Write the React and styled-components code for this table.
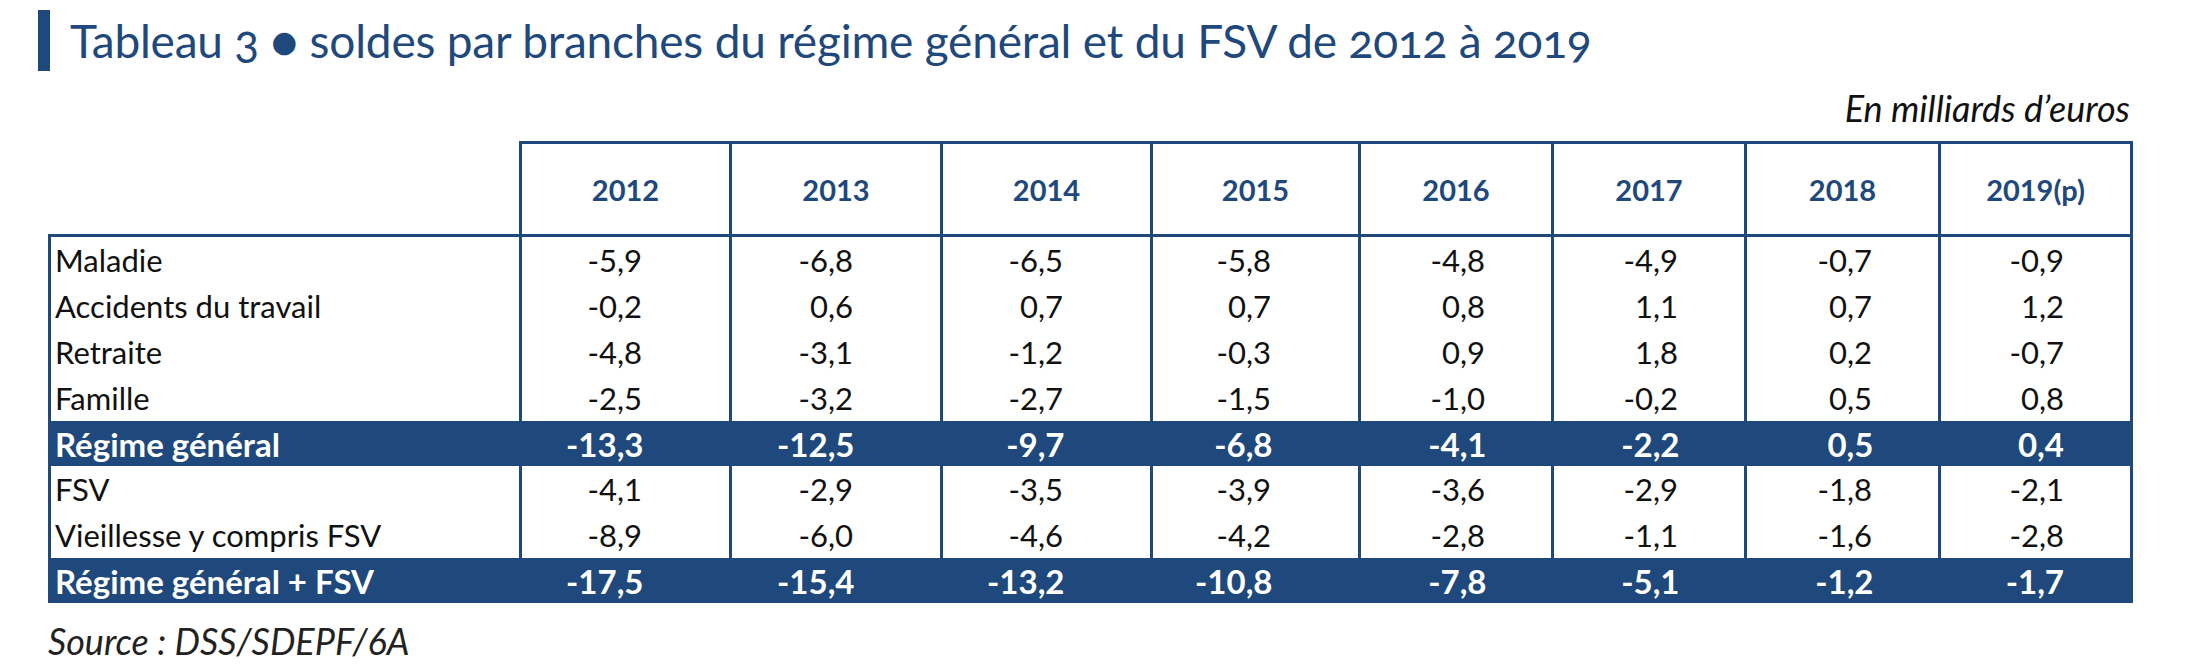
import React from "react";
import styled, { createGlobalStyle } from "styled-components";

const GlobalStyle = createGlobalStyle`
  html, body {
    margin: 0;
    padding: 0;
    background: #ffffff;
  }
  body {
    font-family: Lato, "Open Sans", "Liberation Sans", sans-serif;
    color: #111111;
  }
`;

const navy = "#1f487c";

const Page = styled.div`
  width: 2200px;
  height: 670px;
  box-sizing: border-box;
  padding: 10px 70px 0 48px;
`;

const TitleRow = styled.div`
  display: flex;
  align-items: center;
  gap: 20px;
  margin-left: -10px;
  height: 61px;
`;

const AccentBar = styled.div`
  width: 12px;
  height: 61px;
  background: ${navy};
`;

const Title = styled.h1`
  margin: 0;
  font-family: Lato, "Open Sans", sans-serif;
  font-weight: 400;
  font-size: 46px;
  line-height: 61px;
  color: ${navy};
  font-variant-numeric: oldstyle-nums;
  letter-spacing: -0.2px;
`;

const Unit = styled.div`
  margin-top: 18px;
  text-align: right;
  font-style: italic;
  font-size: 36px;
  line-height: 38px;
  color: #111111;
`;

const Table = styled.table`
  margin-top: 14px;
  width: 2082px;
  table-layout: fixed;
  border-collapse: collapse;
  font-size: 31px;
`;

const HeadCell = styled.th`
  height: 90px;
  padding: 0;
  border: 3px solid ${navy};
  color: ${navy};
  font-weight: 700;
  font-size: 29px;
  text-align: center;
  vertical-align: middle;
`;

const BlankCell = styled.th`
  border: none;
  padding: 0;
`;

const Row = styled.tr`
  background: ${({ $total }) => ($total ? navy : "#ffffff")};
  color: ${({ $total }) => ($total ? "#ffffff" : "#111111")};
  font-weight: ${({ $total }) => ($total ? 700 : 400)};
  font-size: ${({ $total }) => ($total ? "33px" : "31px")};
`;

const LabelCell = styled.td`
  height: ${({ $total }) => ($total ? "45px" : "46px")};
  padding: 0 0 0 4px;
  border-left: 3px solid ${navy};
  border-right: ${({ $total }) => ($total ? "none" : `3px solid ${navy}`)};
  border-top: ${({ $first }) => ($first ? `3px solid ${navy}` : "none")};
  white-space: nowrap;
  vertical-align: middle;
`;

const NumCell = styled.td`
  padding: 0 ${({ $pad }) => $pad}px 0 0;
  text-align: right;
  border-left: ${({ $total }) => ($total ? "none" : `3px solid ${navy}`)};
  border-right: ${({ $total, $last }) =>
    $total && !$last ? "none" : `3px solid ${navy}`};
  border-top: ${({ $first }) => ($first ? `3px solid ${navy}` : "none")};
  vertical-align: middle;
`;

const Source = styled.div`
  margin-top: 18px;
  font-style: italic;
  font-size: 36px;
  line-height: 40px;
  color: #222222;
`;

const years = ["2012", "2013", "2014", "2015", "2016", "2017", "2018", "2019(p)"];
const colWidths = [210, 211, 210, 208, 193, 193, 194, 192];

const rows = [
  { label: "Maladie", values: ["-5,9", "-6,8", "-6,5", "-5,8", "-4,8", "-4,9", "-0,7", "-0,9"] },
  { label: "Accidents du travail", values: ["-0,2", "0,6", "0,7", "0,7", "0,8", "1,1", "0,7", "1,2"] },
  { label: "Retraite", values: ["-4,8", "-3,1", "-1,2", "-0,3", "0,9", "1,8", "0,2", "-0,7"] },
  { label: "Famille", values: ["-2,5", "-3,2", "-2,7", "-1,5", "-1,0", "-0,2", "0,5", "0,8"] },
  { label: "Régime général", total: true, values: ["-13,3", "-12,5", "-9,7", "-6,8", "-4,1", "-2,2", "0,5", "0,4"] },
  { label: "FSV", values: ["-4,1", "-2,9", "-3,5", "-3,9", "-3,6", "-2,9", "-1,8", "-2,1"] },
  { label: "Vieillesse y compris FSV", values: ["-8,9", "-6,0", "-4,6", "-4,2", "-2,8", "-1,1", "-1,6", "-2,8"] },
  { label: "Régime général + FSV", total: true, values: ["-17,5", "-15,4", "-13,2", "-10,8", "-7,8", "-5,1", "-1,2", "-1,7"] },
];

export default function App() {
  return (
    <>
      <GlobalStyle />
      <Page>
        <TitleRow>
          <AccentBar />
          <Title>Tableau 3 ● soldes par branches du régime général et du FSV de 2012 à 2019</Title>
        </TitleRow>
        <Unit>En milliards d’euros</Unit>
        <Table>
          <colgroup>
            <col style={{ width: 471 }} />
            {colWidths.map((w, i) => (
              <col key={i} style={{ width: w }} />
            ))}
          </colgroup>
          <thead>
            <tr>
              <BlankCell />
              {years.map((y) => (
                <HeadCell key={y}>{y}</HeadCell>
              ))}
            </tr>
          </thead>
          <tbody>
            {rows.map((r, ri) => (
              <Row key={r.label} $total={r.total}>
                <LabelCell $total={r.total} $first={ri === 0}>{r.label}</LabelCell>
                {r.values.map((v, i) => (
                  <NumCell
                    key={i}
                    $total={r.total}
                    $first={ri === 0}
                    $last={i === r.values.length - 1}
                    $pad={i < 4 ? 87 : 66}
                  >
                    {v}
                  </NumCell>
                ))}
              </Row>
            ))}
          </tbody>
        </Table>
        <Source>Source : DSS/SDEPF/6A</Source>
      </Page>
    </>
  );
}
